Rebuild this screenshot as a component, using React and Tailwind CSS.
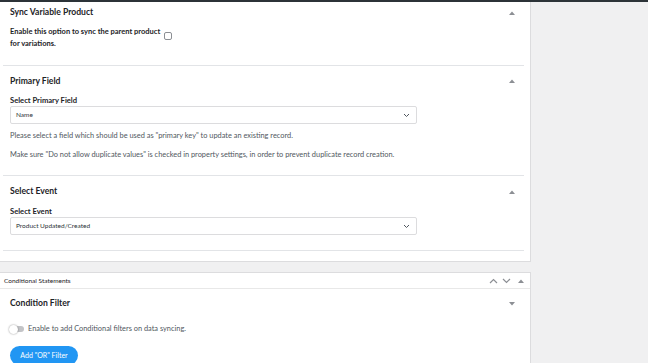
import React from "react";

const Up = () => (
  <svg width="6" height="4" viewBox="0 0 6 4" className="block"><path d="M0 4 L3 0.5 L6 4 Z" fill="#8c8f94" /></svg>
);
const Down = () => (
  <svg width="6" height="4" viewBox="0 0 6 4" className="block"><path d="M0 0 L3 3.5 L6 0 Z" fill="#8c8f94" /></svg>
);
const Chev = ({ up }) => (
  <svg width="9" height="6" viewBox="0 0 9 6" className="block">
    <path d={up ? "M1 5 L4.5 1.5 L8 5" : "M1 1 L4.5 4.5 L8 1"} fill="none" stroke="#8c8f94" strokeWidth="1.2" />
  </svg>
);

const Divider = () => <div className="h-px bg-[#e2e4e7] ml-[3px] mr-[6px] shrink-0" />;

const SectionHeader = ({ title, h }) => (
  <div className={`flex items-center justify-between pl-[10px] pr-[15px] shrink-0 ${h}`}>
    <span className="text-[8.6px] font-bold text-[#1d2327]">{title}</span>
    <Up />
  </div>
);

const Select = ({ value }) => (
  <div className="ml-[10px] w-[407px] h-[18px] shrink-0 border border-[#dcdcde] rounded-[2px] flex items-center justify-between pl-[5px] pr-[6px] bg-white">
    <span className="text-[6.5px] text-[#2c3338]">{value}</span>
    <svg width="7" height="5" viewBox="0 0 7 5"><path d="M1 1 L3.5 3.5 L6 1" fill="none" stroke="#50575e" strokeWidth="1" /></svg>
  </div>
);

export default function App() {
  return (
    <div className="w-[648px] h-[363px] overflow-hidden bg-[#f0f0f1] flex flex-col" style={{ fontFamily: "Lato, 'Noto Sans', sans-serif" }}>
      <div className="h-[2px] bg-[#2c3338] shrink-0" />
      <div className="flex flex-col w-[531px]">
        <div className="bg-white border-r border-b border-[#dcdcde] h-[260px] flex flex-col shrink-0">
          {/* Section 1 */}
          <div className="h-[21px] flex items-center justify-between pl-[10px] pr-[15px] shrink-0">
            <span className="text-[8.6px] font-bold text-[#1d2327]">Sync Variable Product</span>
            <Up />
          </div>
          <div className="flex pl-[10px] pt-[3px] h-[42px] items-start shrink-0">
            <div className="text-[7.5px] font-bold leading-[12px] text-[#1d2327] whitespace-nowrap">
              Enable this option to sync the parent product<br />for variations.
            </div>
            <div className="mt-[6px] ml-[4px] w-[8px] h-[8px] rounded-[2px] border border-[#8c8f94] bg-white" />
          </div>
          <Divider />
          {/* Section 2 */}
          <SectionHeader title="Primary Field" h="h-[30px]" />
          <div className="pl-[10px] h-[9px] flex items-center text-[7.6px] font-bold text-[#1d2327] shrink-0">Select Primary Field</div>
          <div className="h-[1px] shrink-0" />
          <Select value="Name" />
          <div className="pl-[10px] mt-[6px] h-[12px] flex items-center text-[7.4px] text-[#50575e] shrink-0">
            Please select a field which should be used as "primary key" to update an existing record.
          </div>
          <div className="pl-[10px] mt-[7px] h-[12px] flex items-center text-[7.4px] text-[#50575e] shrink-0">
            Make sure "Do not allow duplicate values" is checked in property settings, in order to prevent duplicate record creation.
          </div>
          <div className="h-[14px] shrink-0" />
          <Divider />
          {/* Section 3 */}
          <SectionHeader title="Select Event" h="h-[31px]" />
          <div className="pl-[10px] h-[9px] flex items-center text-[7.6px] font-bold text-[#1d2327] shrink-0">Select Event</div>
          <div className="h-[1px] shrink-0" />
          <Select value="Product Updated/Created" />
          <div className="h-[15px] shrink-0" />
          <Divider />
        </div>
        <div className="h-[10px] shrink-0" />
        <div className="bg-white border border-l-0 border-[#dcdcde] h-[120px] shrink-0">
          <div className="h-[16px] border-b border-[#e8e8e8] flex items-center justify-between pl-[4px] pr-[6px]">
            <span className="text-[6.5px] text-[#1d2327]">Conditional Statements</span>
            <div className="flex items-center gap-[4px]">
              <Chev up />
              <Chev />
              <span className="ml-[3px]"><Up /></span>
            </div>
          </div>
          <div className="h-[29px] flex items-center justify-between pl-[10px] pr-[15px]">
            <span className="text-[8.6px] font-bold text-[#1d2327]">Condition Filter</span>
            <Down />
          </div>
          <div className="h-[6px]" />
          <div className="flex items-center pl-[10px] h-[10px]">
            <div className="relative w-[14px] h-[6px] rounded-full bg-[#c3c4c7]">
              <div className="absolute -left-[1px] -top-[1.5px] w-[9px] h-[9px] rounded-full bg-white shadow-[0_0_2px_rgba(0,0,0,0.45)]" />
            </div>
            <span className="ml-[4px] text-[7.4px] text-[#50575e]">Enable to add Conditional filters on data syncing.</span>
          </div>
          <div className="h-[12px]" />
          <div className="ml-[10px] w-[68px] h-[19px] rounded-full bg-[#2196f3] flex items-center justify-center text-[7px] text-white">
            Add "OR" Filter
          </div>
        </div>
      </div>
    </div>
  );
}
